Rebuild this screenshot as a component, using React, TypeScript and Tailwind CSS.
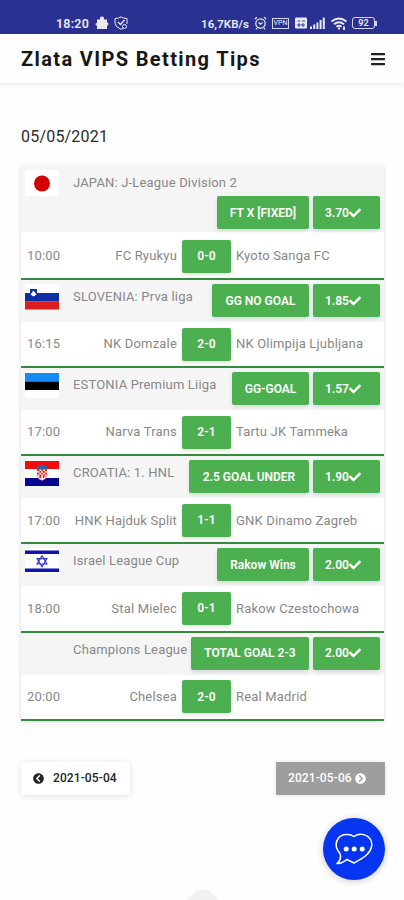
import type { ReactNode } from "react";
import { FaBars, FaCheck, FaChevronCircleLeft, FaChevronCircleRight } from "react-icons/fa";

type Match = {
  flag: ReactNode;
  league: string;
  pick: string;
  pickWidth: string;
  odds: string;
  time: string;
  home: string;
  score: string;
  away: string;
  tall?: boolean;
};

function JapanFlag() {
  return (
    <svg className="block" width="34" height="26" viewBox="0 0 34 26">
      <path fill="#fff" d="M0 0h34v26H0z" />
      <circle cx="17" cy="13.5" r="8" fill="#d40000" />
    </svg>
  );
}

function SloveniaFlag() {
  return (
    <svg className="block" width="34" height="26" viewBox="0 0 34 26">
      <path fill="#fff" d="M0 0h34v9H0z" />
      <path fill="#0b2fa0" d="M0 9h34v8.5H0z" />
      <path fill="#e01b1b" d="M0 17.5h34v8H0z" />
      <path fill="#0b2fa0" d="M5 5h7v5q0 2-3.500 4Q5 12 5 10z" />
      <path fill="#fff" d="m5.500 10.500 3-4 3 4-3 2z" />
    </svg>
  );
}

function EstoniaFlag() {
  return (
    <svg className="block" width="34" height="26" viewBox="0 0 34 26">
      <path fill="#fff" d="M0 0h34v26H0z" />
      <path fill="#1689f5" d="M0 1h34v8.500H0z" />
      <path fill="#000" d="M0 9.500h34V18H0z" />
    </svg>
  );
}

function CroatiaFlag() {
  return (
    <svg className="block" width="34" height="26" viewBox="0 0 34 26">
      <path fill="#fff" d="M0 0h34v26H0z" />
      <path fill="#f80808" d="M0 1h34v8H0z" />
      <path fill="#08088c" d="M0 18h34v8H0z" />
      <path fill="#fff" stroke="#e33" strokeWidth="0.6" d="M12.500 9h9v7q-.5 3.500-4.500 4.500-4-1-4.500-4.500z" />
      <path
        stroke="#e01818"
        strokeWidth="1.800"
        strokeDasharray="1.800 1.800"
        fill="none"
        d="M12.600 10h9M14.400 11.800h7M12.600 13.600h9M14.400 15.400h7M14.400 17.200h5"
      />
      <path fill="#35629d" d="m11.500 6 2-1 1.700.6L17 4.500l1.800 1.100 1.700-.6 2 1-.8 3.200h-9.400z" />
    </svg>
  );
}

function IsraelFlag() {
  return (
    <svg className="block" width="34" height="26" viewBox="0 0 34 26">
      <path fill="#fff" d="M0 0h34v26H0z" />
      <path fill="#1111b5" d="M0 2.500h34v3.500H0zM0 20.500h34V24H0z" />
      <path fill="none" stroke="#3434c4" strokeWidth="1.200" d="m17 7.800 4.900 8.200h-9.800zM17 18.800l4.900-8.200h-9.800z" />
    </svg>
  );
}

const matches: Match[] = [
  { flag: <JapanFlag />, league: "JAPAN: J-League Division 2", pick: "FT X [FIXED]", pickWidth: "w-[92px]", odds: "3.70", time: "10:00", home: "FC Ryukyu", score: "0-0", away: "Kyoto Sanga FC", tall: true },
  { flag: <SloveniaFlag />, league: "SLOVENIA: Prva liga", pick: "GG NO GOAL", pickWidth: "w-[97px]", odds: "1.85", time: "16:15", home: "NK Domzale", score: "2-0", away: "NK Olimpija Ljubljana" },
  { flag: <EstoniaFlag />, league: "ESTONIA Premium Liiga", pick: "GG-GOAL", pickWidth: "w-[77px]", odds: "1.57", time: "17:00", home: "Narva Trans", score: "2-1", away: "Tartu JK Tammeka" },
  { flag: <CroatiaFlag />, league: "CROATIA: 1. HNL", pick: "2.5 GOAL UNDER", pickWidth: "w-[120px]", odds: "1.90", time: "17:00", home: "HNK Hajduk Split", score: "1-1", away: "GNK Dinamo Zagreb" },
  { flag: <IsraelFlag />, league: "Israel League Cup", pick: "Rakow Wins", pickWidth: "w-[92px]", odds: "2.00", time: "18:00", home: "Stal Mielec", score: "0-1", away: "Rakow Czestochowa" },
  { flag: null, league: "Champions League", pick: "TOTAL GOAL 2-3", pickWidth: "w-[118px]", odds: "2.00", time: "20:00", home: "Chelsea", score: "2-0", away: "Real Madrid" },
];

function StatusBar() {
  return (
    <div className="flex h-[34px] items-end bg-[#2b3190] pb-[3px] pl-14 pr-[27px] text-white/90">
      <div className="flex h-4 flex-1 items-center">
        <span className="w-[39px] pt-px text-[12.5px] font-semibold leading-4 tracking-[0.2px]">18:20</span>
        <svg width="14" height="14" viewBox="0 0 14 14" fill="currentColor">
          <path d="M2 3.500h3.200C4.500 1.800 5.500.500 7 .500s2.500 1.300 1.800 3H12v9.500H2V9.500C0 9.800 0 6.500 2 7zM12 6.500c2-.500 2 3.500 0 3z" />
        </svg>
        <svg className="ml-[5px]" width="14" height="14" viewBox="0 0 14 14" fill="none" stroke="currentColor">
          <path d="M1 2.500Q5 2.500 7 .8q2 1.700 6 1.700V8M1 2.500V7q0 4 6 6.300l2-.8" />
          <path d="m4 6 2.500 2.500L10.500 4" strokeWidth="1.300" />
          <circle cx="10.500" cy="10.500" r="2" />
        </svg>
      </div>
      <div className="flex h-4 items-center">
        <span className="w-[53px] whitespace-nowrap pt-px text-[11.5px] font-semibold leading-4 tracking-[0.1px]">16,7KB/s</span>
        <svg width="13" height="14" viewBox="0 0 13 14" fill="none" stroke="currentColor" strokeWidth="1.200">
          <circle cx="6.500" cy="7.500" r="4.700" />
          <path d="M.8 3 3 1.200M12.200 3 10 1.200M4.500 6.500l2 1.800 2-1.800M3 12l-1 1.300M10 12l1 1.300" />
        </svg>
        <span className="ml-[5px] flex h-[11px] w-[17px] items-center justify-center border border-white/80 text-[7px] leading-none">VPN</span>
        <svg className="ml-[6px]" width="12" height="12" viewBox="0 0 12 12">
          <rect y=".5" width="12" height="11" rx="1" fill="currentColor" />
          <path d="M2.500 4h3m1.500 0h3M3 7h2v2H3zm4 0h2v2H7z" stroke="#2b3190" strokeWidth=".9" fill="none" />
        </svg>
        <svg className="ml-[3px]" width="15" height="12" viewBox="0 0 15 12" fill="currentColor">
          <path d="M0 9.500h2V12H0zM3.200 7.500h2V12h-2zM6.400 5.500h2V12h-2zM9.600 3h2v9h-2zM12.800.500h2V12h-2z" />
        </svg>
        <svg className="ml-[6px]" width="16" height="13" viewBox="0 0 16 13" fill="none" stroke="currentColor" strokeWidth="1.900">
          <path d="M.5 4.500q7.500-6 15 0M3 7.200q5-4 10 0M5.500 9.800q2.500-2 5 0" />
          <path d="M7 11.500h2M13 9.500V13" />
        </svg>
        <span className="ml-[5px] flex h-[12px] w-[23px] items-center justify-center rounded-[3px] border-[1.5px] border-white/80 text-[9px] font-semibold leading-none">92</span>
        <span className="h-[5px] w-[2px] bg-white/80" />
      </div>
    </div>
  );
}

function Header() {
  return (
    <header className="flex h-[49px] items-center justify-between pl-[21px] pr-[19px] shadow-[0_1px_5px_rgba(0,0,0,0.12)]">
      <h1 className="whitespace-nowrap text-[20px] font-bold tracking-[1.37px] text-[#171717]">Zlata VIPS Betting Tips</h1>
      <FaBars className="h-[16px] w-[14px] text-[#222]" />
    </header>
  );
}

const button =
  "flex h-[33px] shrink-0 items-center whitespace-nowrap rounded-[2px] bg-[#4caf50] text-[12px] font-semibold text-white shadow-[0_2px_4px_rgba(0,0,0,0.12)]";

function MatchRow({ match }: { match: Match }) {
  return (
    <div className={`flex flex-col border-b-2 border-[#358a3b] ${match.tall ? "h-[114px]" : "h-[88.15px]"}`}>
      <div className={`flex bg-[#f5f5f5] pl-1 pr-1 ${match.tall ? "h-[66px]" : "h-[42px]"}`}>
        <div className="w-12 shrink-0 pt-1">{match.flag}</div>
        <div className={`flex min-w-0 flex-1 pt-1 ${match.tall ? "flex-col" : "justify-between"}`}>
          <span className="h-[22px] whitespace-nowrap pt-[3px] text-[13px] leading-5 tracking-[0.18px]">{match.league}</span>
          <div className={`flex gap-1 ${match.tall ? "mt-1 self-end" : "self-start"}`}>
            <span className={`${button} ${match.pickWidth} justify-center`}>{match.pick}</span>
            <span className={`${button} w-[67px] pl-3`}>
              {match.odds}
              <FaCheck className="size-[12px]" />
            </span>
          </div>
        </div>
      </div>
      <div className={`flex items-center text-[13px] tracking-[0.18px] ${match.tall ? "h-[46px] pt-0.5" : "h-[44px]"}`}>
        <span className="w-[46px] pl-[6px]">{match.time}</span>
        <span className="w-[110px] whitespace-nowrap text-right">{match.home}</span>
        <span className={`${button} ml-[5px] w-[49px] justify-center`}>{match.score}</span>
        <span className="whitespace-nowrap pl-[5px]">{match.away}</span>
      </div>
    </div>
  );
}

function ChatButton() {
  return (
    <button className="fixed left-[323px] top-[818px] flex size-[62px] items-center justify-center rounded-full bg-[#0535f0] shadow-[0_1px_7px_rgba(0,0,0,0.22)]">
      <svg width="40" height="34" viewBox="0 0 40 34" fill="none" stroke="#fff" strokeWidth="1.500" strokeLinejoin="round">
        <path d="M20 4.500C16 1.500 8 1.500 4.500 6C1 10.500 1.500 16 6 21.500C7.200 25 6.500 28.500 3 31.500C7 32 9 30 13 27.500C16 29 18 30 20 31C24 28.500 29 26.500 33 22.500C38.500 17 39.500 10 35 5.500C31 1.500 24 1.500 20 4.500Z" />
        <g fill="#fff" stroke="none">
          <circle cx="12.200" cy="17" r="2.500" />
          <circle cx="20.200" cy="17" r="2.500" />
          <circle cx="28.200" cy="17" r="2.500" />
        </g>
      </svg>
    </button>
  );
}

export default function App() {
  return (
    <div className="flex h-[900px] w-[404px] flex-col overflow-hidden bg-[#fefefe] font-[Roboto,sans-serif] text-[#888]">
      <StatusBar />
      <Header />
      <main className="flex flex-1 flex-col px-[21px] pt-[42px]">
        <h2 className="h-[41px] text-[16px] leading-6 tracking-[0.2px] text-[#2b2b2b]">05/05/2021</h2>
        <section className="w-[363px] bg-white shadow-[0_1px_4px_rgba(0,0,0,0.16)]">
          {matches.map((match) => (
            <MatchRow key={match.league} match={match} />
          ))}
        </section>
        <nav className="mt-[41px] flex justify-between text-[12px] font-medium">
          <button className="flex h-[33px] w-[109px] items-center gap-[9px] rounded-[2px] bg-white pl-3 text-[#252525] shadow-[0_1px_6px_rgba(0,0,0,0.12)]">
            <FaChevronCircleLeft className="size-[11px]" />
            <span className="whitespace-nowrap tracking-[0.1px]">2021-05-04</span>
          </button>
          <button className="mr-[-2px] flex h-[33px] w-[109px] items-center gap-[3px] bg-[#9e9e9e] pl-3 text-white shadow-[0_1px_5px_rgba(0,0,0,0.12)]">
            <span className="whitespace-nowrap tracking-[0.1px]">2021-05-06</span>
            <FaChevronCircleRight className="size-[11px]" />
          </button>
        </nav>
        <div className="mb-[-1px] mt-auto flex justify-center">
          <svg width="36" height="12" viewBox="0 0 36 12">
            <path fill="#f1f1f1" d="M2 12 12 2q1-1 3-1h8q2 0 3 1l10 10z" />
          </svg>
        </div>
      </main>
      <ChatButton />
    </div>
  );
}
